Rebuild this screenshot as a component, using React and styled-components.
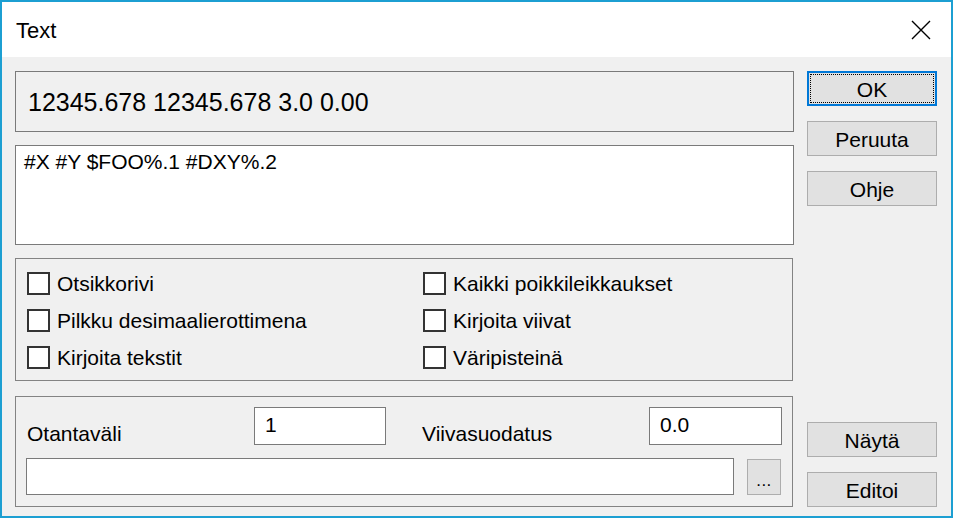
import React from "react";
import styled, { createGlobalStyle } from "styled-components";

const GlobalStyle = createGlobalStyle`
  html, body { margin: 0; padding: 0; background: #ffffff; }
  body { font-family: "Liberation Sans", Arial, sans-serif; color: #000; }
  * { box-sizing: border-box; }
`;

const Window = styled.div`
  width: 953px;
  height: 518px;
  border: 2px solid #1c9fd2;
  background: #f0f0f0;
  display: flex;
  flex-direction: column;
`;

const TitleBar = styled.div`
  height: 56px;
  background: #ffffff;
  display: flex;
  align-items: center;
  justify-content: space-between;
  padding: 0 20px 0 14px;
`;

const Title = styled.div`
  font-size: 22px;
  padding-top: 2px;
`;

const CloseIcon = styled.svg`
  width: 20px;
  height: 20px;
  margin-top: 1px;
`;

const Body = styled.div`
  flex: 1;
  display: flex;
  gap: 13px;
  padding: 14px 0 9px 13px;
`;

const Main = styled.div`
  width: 779px;
  display: flex;
  flex-direction: column;
`;

const Display = styled.div`
  height: 61px;
  border: 1px solid #7a7a7a;
  display: flex;
  align-items: center;
  padding: 1px 0 0 12px;
  font-size: 25px;
`;

const TextArea = styled.div`
  margin-top: 13px;
  height: 100px;
  background: #ffffff;
  border: 1px solid #7a7a7a;
  padding: 4px 8px;
  font-size: 21px;
  line-height: 24px;
`;

const Group = styled.div`
  margin-top: ${(p) => p.$top}px;
  width: 778px;
  height: ${(p) => p.$h}px;
  border: 1px solid #838383;
`;

const CheckGrid = styled(Group)`
  padding: 13px 11px 11px;
  display: grid;
  grid-template-columns: 396px 1fr;
  grid-template-rows: repeat(3, 23px);
  grid-auto-flow: column;
  row-gap: 14px;
`;

const CheckItem = styled.label`
  display: flex;
  align-items: center;
  gap: 7px;
  font-size: 21px;
  line-height: 24px;
`;

const Box = styled.span`
  width: 23px;
  height: 23px;
  background: #ffffff;
  border: 2px solid #333333;
  flex: none;
`;

const FieldGroup = styled(Group)`
  padding: 10px 9px 11px 11px;
  display: flex;
  flex-direction: column;
  gap: 13px;
`;

const FieldRow = styled.div`
  display: grid;
  grid-template-columns: 227px 132px 36px 227px 133px;
  height: 38px;
`;

const FieldLabel = styled.div`
  font-size: 21px;
  line-height: 24px;
  align-self: end;
  margin-bottom: -1px;
`;

const Input = styled.div`
  background: #ffffff;
  border: 1px solid #7a7a7a;
  font-size: 21px;
  line-height: 24px;
  padding: 5px 10px;
  height: ${(p) => p.$h || 38}px;
  width: ${(p) => (p.$w ? p.$w + "px" : "auto")};
`;

const PathRow = styled.div`
  display: flex;
  align-items: center;
  gap: 13px;
  height: 37px;
  margin-left: -1px;
`;

const Button = styled.div`
  width: ${(p) => p.$w || 130}px;
  height: ${(p) => p.$h || 35}px;
  background: #e1e1e1;
  border: ${(p) => (p.$default ? "2px solid #0078d7" : "1px solid #adadad")};
  display: flex;
  align-items: center;
  justify-content: center;
  font-size: 21px;
  padding-top: 3px;
  position: relative;
`;

const FocusRect = styled.span`
  position: absolute;
  inset: 1px;
  border: 1px dotted #000;
`;

const Dots = styled.span`
  font-size: 17px;
  padding-top: 6px;
  letter-spacing: 0.5px;
`;

const ButtonColumn = styled.div`
  width: 130px;
  display: flex;
  flex-direction: column;
  gap: 15px;
`;

const Spacer = styled.div`
  flex: 1;
`;

export default function App() {
  return (
    <>
      <GlobalStyle />
      <Window>
        <TitleBar>
          <Title>Text</Title>
          <CloseIcon viewBox="0 0 20 20">
            <path d="M1 1 L19 19 M19 1 L1 19" stroke="#000" strokeWidth="1.4" fill="none" />
          </CloseIcon>
        </TitleBar>
        <Body>
          <Main>
            <Display>12345.678 12345.678 3.0 0.00</Display>
            <TextArea>#X #Y $FOO%.1 #DXY%.2</TextArea>
            <CheckGrid $top={13} $h={123}>
              <CheckItem><Box />Otsikkorivi</CheckItem>
              <CheckItem><Box />Pilkku desimaalierottimena</CheckItem>
              <CheckItem><Box />Kirjoita tekstit</CheckItem>
              <CheckItem><Box />Kaikki poikkileikkaukset</CheckItem>
              <CheckItem><Box />Kirjoita viivat</CheckItem>
              <CheckItem><Box />Väripisteinä</CheckItem>
            </CheckGrid>
            <FieldGroup $top={15} $h={111}>
              <FieldRow>
                <FieldLabel>Otantaväli</FieldLabel>
                <Input>1</Input>
                <span />
                <FieldLabel>Viivasuodatus</FieldLabel>
                <Input>0.0</Input>
              </FieldRow>
              <PathRow>
                <Input $w={708} $h={37} />
                <Button $w={34} $h={36}><Dots>...</Dots></Button>
              </PathRow>
            </FieldGroup>
          </Main>
          <ButtonColumn>
            <Button $default>
              <FocusRect />
              OK
            </Button>
            <Button>Peruuta</Button>
            <Button>Ohje</Button>
            <Spacer />
            <Button>Näytä</Button>
            <Button>Editoi</Button>
          </ButtonColumn>
        </Body>
      </Window>
    </>
  );
}
